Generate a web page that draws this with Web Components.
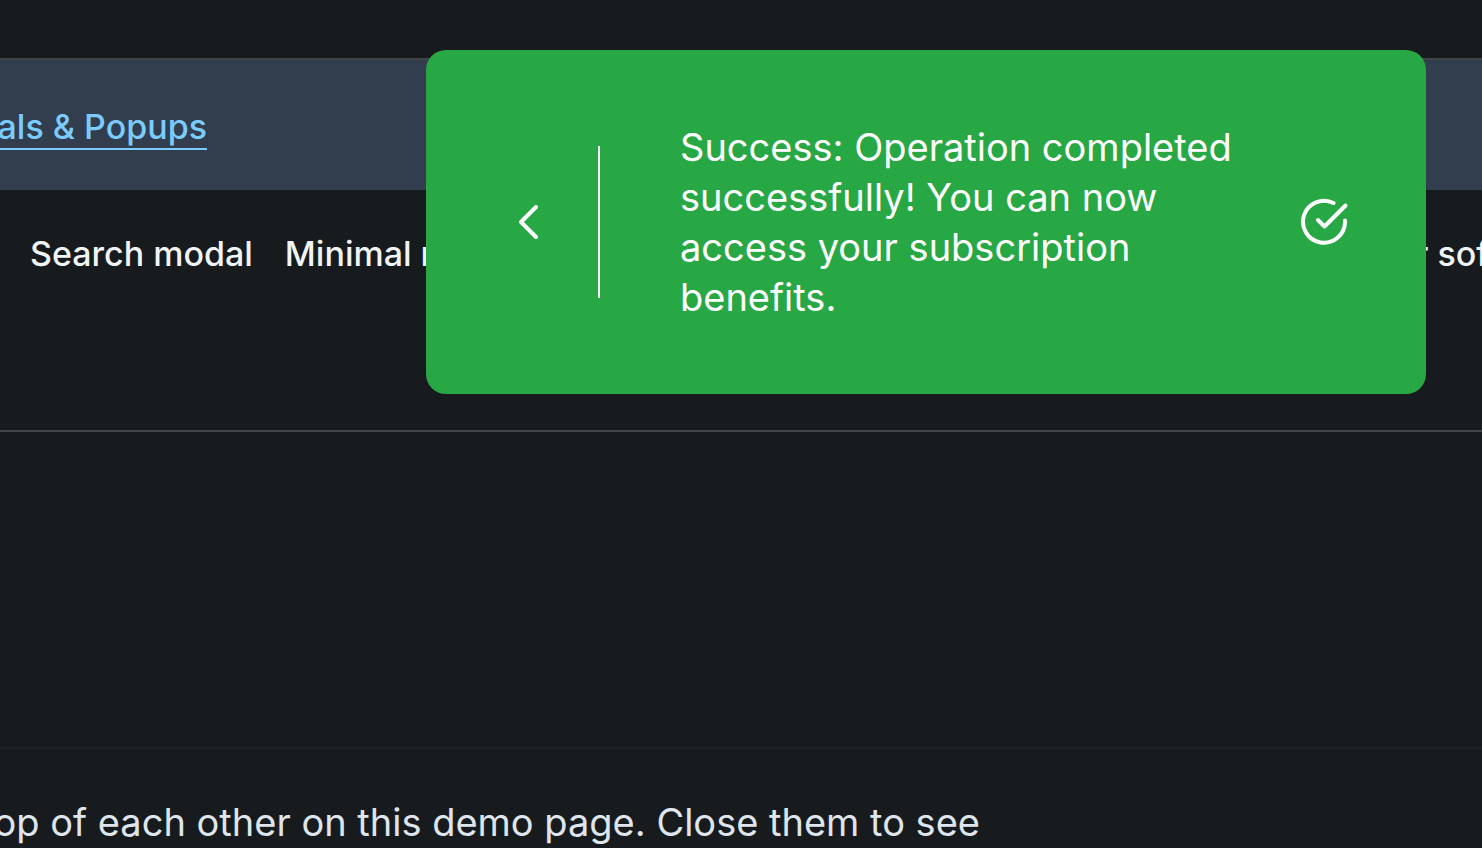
<!DOCTYPE html>
<html lang="en">
<head>
<meta charset="utf-8">
<title>Modals &amp; Popups</title>
<style>
html, body { margin: 0; background: #171b1e; }
body { font-family: Inter, "Liberation Sans", sans-serif; overflow: hidden; }
</style>
</head>
<body>
<demo-page></demo-page>
<script>
const define = (name, html) => customElements.define(name, class extends HTMLElement {
  constructor() {
    super();
    this.attachShadow({ mode: 'open' }).innerHTML = html;
  }
});

define('crumb-bar', `
<style>
  :host { display: flex; box-sizing: border-box; background: #323d4d; border-top: 2px solid #424548; padding: 46px 0 40px; overflow: hidden; }
  nav { width: 207px; display: flex; justify-content: flex-end; }
  a { flex: none; font-size: 34px; line-height: 42px; font-weight: 500; color: #7accff; text-decoration: none; border-bottom: 2px solid #7accff; white-space: nowrap; }
</style>
<nav aria-label="Sections"><a href="#modals"><slot></slot></a></nav>`);

define('nav-link', `
<style>
  :host { display: block; flex: none; }
  a { display: block; font-size: 34px; line-height: 44px; font-weight: 500; color: #f1f4f6; text-decoration: none; white-space: nowrap; }
</style>
<a href="#item"><slot></slot></a>`);

define('nav-strip', `
<style>
  :host { display: block; overflow: hidden; padding: 42px 0 154px; border-bottom: 2px solid #424548; }
  nav { display: flex; gap: 32px; margin: 0 -98px 0 30px; }
  ::slotted(:last-child) { margin-left: auto; }
</style>
<nav aria-label="Examples"><slot></slot></nav>`);

define('demo-note', `
<style>
  :host { display: block; overflow: hidden; margin-top: 315px; border-top: 2px solid #1f2326; padding: 48px 0 0; }
  div { width: 980px; display: flex; justify-content: flex-end; }
  p { flex: none; margin: 0; font-size: 38px; line-height: 50px; color: #dfe5ec; white-space: nowrap; }
</style>
<div><p><slot></slot></p></div>`);

define('toast-message', `
<style>
  :host { position: absolute; top: 50px; right: 56px; width: 1000px; box-sizing: border-box; display: flex; align-items: center; padding: 72px 75px; border-radius: 20px; background: #28a745; color: #fff; }
  button { flex: none; display: flex; justify-content: center; width: 54px; padding: 8px 0; border: 0; background: none; color: inherit; }
  .rule { flex: none; width: 2px; height: 152px; margin: 0 80px 0 43px; background: #fff; }
  p { flex: 1; margin: 0; padding-right: 48px; font-size: 38px; line-height: 50px; }
  svg { display: block; flex: none; }
</style>
<button type="button" aria-label="Back">
  <svg width="24" height="36" viewBox="0 0 24 36" fill="none" stroke="currentColor" stroke-width="4" stroke-linecap="round" stroke-linejoin="round"><path d="M20 3 5 18l15 15"/></svg>
</button>
<span class="rule"></span>
<p><slot></slot></p>
<svg width="52" height="50" viewBox="0 0 52 50" fill="none" stroke="currentColor" stroke-width="4" stroke-linecap="round" stroke-linejoin="round" aria-hidden="true"><path d="M46 23.500V25A21 21 0 1 1 34.500 6"/><path d="M46.500 8.500 25.500 29.500l-6.500-6.500"/></svg>`);

define('demo-page', `
<style>
  :host { display: block; position: relative; padding-top: 58px; }
</style>
<crumb-bar>Modals &amp; Popups</crumb-bar>
<nav-strip>
  <nav-link>Search modal</nav-link>
  <nav-link>Minimal modal</nav-link>
  <nav-link>Newsletter software</nav-link>
</nav-strip>
<demo-note>top of each other on this demo page. Close them to see</demo-note>
<toast-message role="status">Success: Operation completed successfully! You can now access your subscription benefits.</toast-message>`);
</script>
</body>
</html>
